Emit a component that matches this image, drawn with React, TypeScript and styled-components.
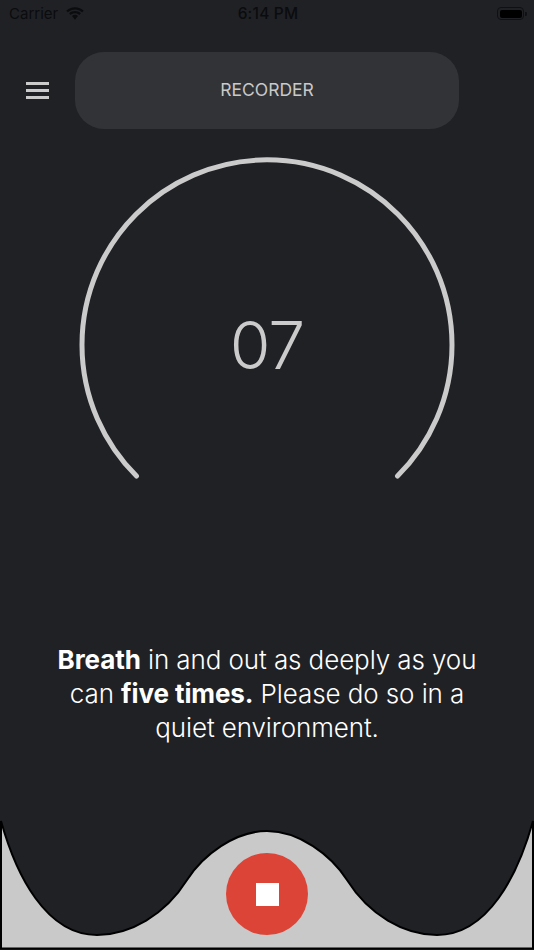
import React from 'react'
import styled, { createGlobalStyle } from 'styled-components'

const GlobalStyle = createGlobalStyle`
  html, body {
    margin: 0;
    padding: 0;
    background: #202125;
    font-family: Inter, "Liberation Sans", sans-serif;
  }
`

const Screen = styled.div`
  width: 534px;
  height: 950px;
  overflow: hidden;
  display: flex;
  flex-direction: column;
  background: #202125;
`

const StatusBar = styled.div`
  height: 27px;
  display: grid;
  grid-template-columns: 1fr auto 1fr;
  align-items: center;
  padding: 0 7px 0 9px;
  color: #0b0c0e;
  font-size: 15px;
`

const Carrier = styled.div`
  display: flex;
  align-items: center;
  gap: 7px;
  color: #0b0c0e;
`

const Time = styled.div`
  font-size: 15.5px;
  font-weight: 500;
  letter-spacing: 0.2px;
`

const BatteryWrap = styled.div`
  justify-self: end;
  display: flex;
  align-items: center;
`

const BatteryShell = styled.div`
  width: 27px;
  height: 13px;
  padding: 1.5px;
  box-sizing: border-box;
  border: 1px solid #0f1013;
  border-radius: 4px;
`

const BatteryFill = styled.div`
  width: 100%;
  height: 100%;
  background: #000;
  border-radius: 2px;
`

const BatteryCap = styled.div`
  width: 2px;
  height: 4px;
  margin-left: 1px;
  background: #0f1013;
  border-radius: 0 1px 1px 0;
`

const Header = styled.div`
  display: flex;
  align-items: center;
  margin-top: 25px;
  padding-left: 26px;
`

const MenuButton = styled.button`
  width: 23px;
  height: 17px;
  padding: 0;
  margin-right: 26px;
  border: 0;
  background: transparent;
  display: flex;
  flex-direction: column;
  justify-content: space-between;
`

const MenuLine = styled.span`
  display: block;
  height: 3px;
  background: #cbcbcb;
`

const TitlePill = styled.div`
  width: 384px;
  height: 77px;
  padding-bottom: 2px;
  box-sizing: border-box;
  border-radius: 29px;
  background: #323337;
  color: #c9c9c9;
  font-size: 17.5px;
  display: flex;
  align-items: center;
  justify-content: center;
`

const Gauge = styled.div`
  position: relative;
  width: 380px;
  height: 330px;
  margin: 28px auto 0;
`

const GaugeArc = styled.svg`
  display: block;
`

const GaugeValue = styled.div`
  position: absolute;
  left: 0;
  right: 0;
  top: 150px;
  text-align: center;
  color: #cbcbcb;
  font-size: 66px;
  line-height: 76px;
  font-weight: 350;
  letter-spacing: -1px;
`

const Hint = styled.p`
  margin: 156px 0 0;
  padding: 0 40px;
  color: #fff;
  font-size: 26px;
  line-height: 34px;
  text-align: center;
  font-weight: 350;
  letter-spacing: -0.1px;

  strong {
    font-weight: 700;
  }
`

const Dock = styled.div`
  position: relative;
  margin-top: auto;
  height: 130px;
`

const DockWave = styled.svg`
  display: block;
`

const StopButton = styled.button`
  position: absolute;
  left: 226px;
  top: 33px;
  width: 82px;
  height: 82px;
  padding: 0;
  border: 0;
  border-radius: 50%;
  background: #db4437;
  display: flex;
  align-items: center;
  justify-content: center;
`

const StopGlyph = styled.span`
  display: block;
  width: 23px;
  height: 23px;
  background: #fff;
`

export default function App() {
  return (
    <Screen>
      <GlobalStyle />
      <StatusBar>
        <Carrier>
          Carrier
          <svg width="20" height="15" viewBox="0 0 19 14">
            <path d="M9.500 3.200c2.600 0 5 1 6.800 2.700l1.500-1.600C15.600 2.200 12.700 1 9.500 1S3.400 2.200 1.200 4.300l1.500 1.600C4.500 4.200 6.900 3.200 9.500 3.200z" fill="#0b0c0e" />
            <path d="M9.500 6.800c1.600 0 3 .6 4.100 1.600l1.500-1.600C13.600 5.400 11.700 4.600 9.500 4.600S5.400 5.400 3.900 6.800l1.500 1.600c1.100-1 2.500-1.600 4.100-1.600z" fill="#0b0c0e" />
            <path d="M9.500 8.200c-1.100 0-2.100.4-2.800 1.100l2.800 3.700 2.800-3.700c-.7-.7-1.700-1.100-2.800-1.100z" fill="#0b0c0e" />
          </svg>
        </Carrier>
        <Time>6:14 PM</Time>
        <BatteryWrap>
          <BatteryShell>
            <BatteryFill />
          </BatteryShell>
          <BatteryCap />
        </BatteryWrap>
      </StatusBar>

      <Header>
        <MenuButton aria-label="Menu">
          <MenuLine />
          <MenuLine />
          <MenuLine />
        </MenuButton>
        <TitlePill>RECORDER</TitlePill>
      </Header>

      <Gauge>
        <GaugeArc width="380" height="330" viewBox="0 0 380 330">
          <path
            d="M59.500 319 A185 185 0 1 1 320.500 319"
            fill="none"
            stroke="#cbcbcb"
            strokeWidth="5"
            strokeLinecap="round"
          />
        </GaugeArc>
        <GaugeValue>07</GaugeValue>
      </Gauge>

      <Hint>
        <strong>Breath</strong> in and out as deeply as you can <strong>five times.</strong> Please do so in a quiet environment.
      </Hint>

      <Dock>
        <DockWave width="534" height="130" viewBox="0 820 534 130">
          <path
            d="M1 821 C16 875 46 935 97 935 C130 935 165 915 187 880 C203 855 235 831 267 831 C299 831 331 855 347 880 C369 915 404 935 437 935 C488 935 518 875 533 821 L533 948.500 L1 948.500 Z"
            fill="#c9c9c9"
            stroke="#000"
            strokeWidth="2"
          />
        </DockWave>
        <StopButton aria-label="Stop">
          <StopGlyph />
        </StopButton>
      </Dock>
    </Screen>
  )
}
